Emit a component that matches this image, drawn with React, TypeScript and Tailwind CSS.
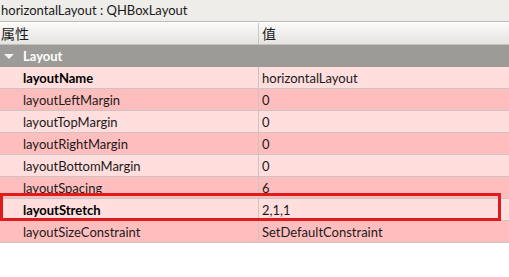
import React from "react";

const rows = [
  { name: "layoutName", value: "horizontalLayout", bold: true },
  { name: "layoutLeftMargin", value: "0" },
  { name: "layoutTopMargin", value: "0" },
  { name: "layoutRightMargin", value: "0" },
  { name: "layoutBottomMargin", value: "0" },
  { name: "layoutSpacing", value: "6" },
  { name: "layoutStretch", value: "2,1,1", bold: true, marked: true },
  { name: "layoutSizeConstraint", value: "SetDefaultConstraint" },
];

export default function App() {
  return (
    <div
      className="w-[509px] h-[277px] bg-white text-[13px] text-[#1a1a1a] overflow-hidden"
      style={{ fontFamily: '"Lato", "Noto Sans CJK SC", sans-serif' }}
    >
      <div className="h-[22px] bg-[#efedea] border-b border-[#bdbbb8] flex items-center pl-[1px] text-[13px]">
        horizontalLayout : QHBoxLayout
      </div>
      <div className="h-[23px] flex border-b border-[#c4c2bf] bg-gradient-to-b from-[#fbfaf9] to-[#e6e4e1] border-t border-t-[#fff]">
        <div className="w-[259px] border-r border-[#c9c7c4] flex items-center pl-[1px] text-[14px]">属性</div>
        <div className="flex-1 flex items-center pl-[3px] text-[14px]">值</div>
      </div>
      <div className="h-[22px] bg-[#9d9b97] flex items-center text-white font-bold text-[13px] pt-[1px]">
        <svg width="10" height="6" viewBox="0 0 10 6" className="ml-[4px] mr-[9px]">
          <path d="M0 0 L10 0 L5 5 Z" fill="#f4f4f4" />
        </svg>
        Layout
      </div>
      {rows.map((r, i) => (
        <div
          key={r.name}
          className={`relative h-[22px] flex border-b border-[#cdc3c2] text-[13px] ${
            i % 2 === 0 ? "bg-[#ffdedd]" : "bg-[#ffbebe]"
          }`}
        >
          <div className={`w-[259px] border-r border-[#cdc3c2] flex items-center pl-[23px] pt-[2px] ${r.bold ? "font-bold text-black" : ""}`}>
            {r.name}
          </div>
          <div className="flex-1 flex items-center pl-[3px] pt-[2px]">{r.value}</div>
          {r.marked && (
            <div className="absolute left-0 top-[-6px] w-[501px] h-[28px] border-[3px] border-[#e11b1b]" />
          )}
        </div>
      ))}
    </div>
  );
}
